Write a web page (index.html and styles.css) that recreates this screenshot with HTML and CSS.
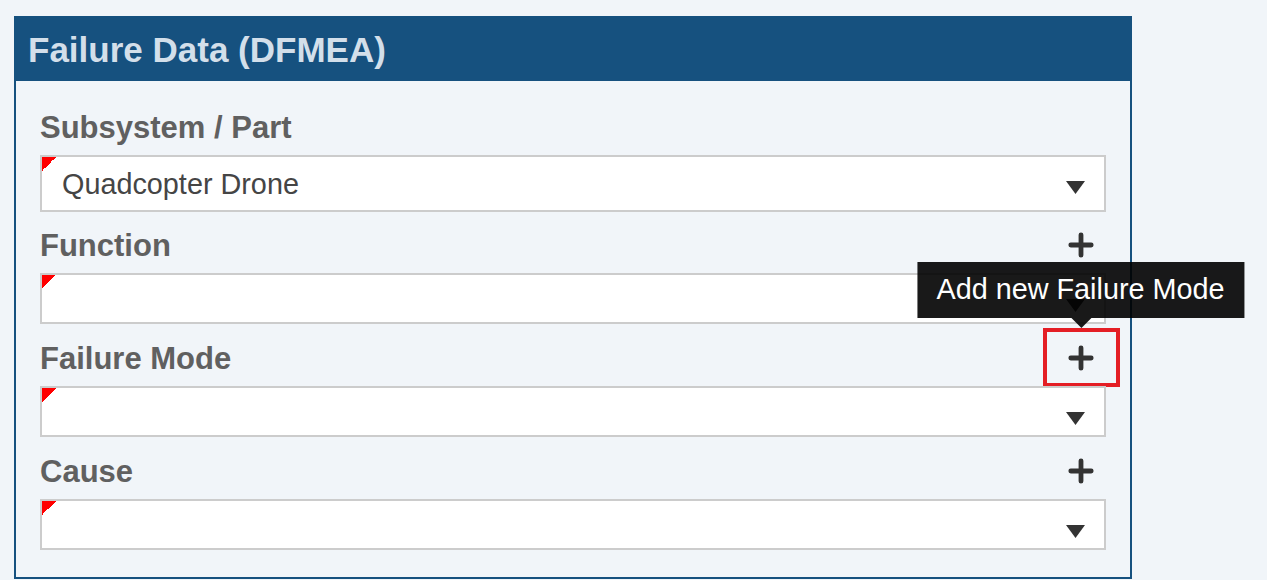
FILE: index.html
```html
<!DOCTYPE html>
<html lang="en">
<head>
<meta charset="utf-8">
<title>Failure Data (DFMEA)</title>
<link rel="stylesheet" href="styles.css">
</head>
<body>
<section class="panel">
  <header class="panel-head">Failure Data (DFMEA)</header>
  <div class="panel-body">
    <div class="field">
      <div class="label-row"><span class="label">Subsystem / Part</span></div>
      <div class="select select-filled">
        <span class="select-text">Quadcopter Drone</span>
        <svg class="caret" width="19" height="13" viewBox="0 0 19 13"><path d="M0 0H19L9.5 13Z" fill="#333"/></svg>
      </div>
    </div>
    <div class="field">
      <div class="label-row">
        <span class="label">Function</span>
        <span class="add"><svg width="26" height="26" viewBox="0 0 26 26"><path d="M2.8 13H23.2M13 2.8V23.2" stroke="#333" stroke-width="4.8" stroke-linecap="round"/></svg></span>
      </div>
      <div class="select">
        <span class="select-text"></span>
        <svg class="caret" width="19" height="13" viewBox="0 0 19 13"><path d="M0 0H19L9.5 13Z" fill="#333"/></svg>
      </div>
    </div>
    <div class="field">
      <div class="label-row">
        <span class="label">Failure Mode</span>
        <span class="add add-active">
          <svg width="26" height="26" viewBox="0 0 26 26"><path d="M2.8 13H23.2M13 2.8V23.2" stroke="#333" stroke-width="4.8" stroke-linecap="round"/></svg>
          <span class="highlight"></span>
          <span class="tooltip">Add new Failure Mode</span>
        </span>
      </div>
      <div class="select">
        <span class="select-text"></span>
        <svg class="caret" width="19" height="13" viewBox="0 0 19 13"><path d="M0 0H19L9.5 13Z" fill="#333"/></svg>
      </div>
    </div>
    <div class="field">
      <div class="label-row">
        <span class="label">Cause</span>
        <span class="add"><svg width="26" height="26" viewBox="0 0 26 26"><path d="M2.8 13H23.2M13 2.8V23.2" stroke="#333" stroke-width="4.8" stroke-linecap="round"/></svg></span>
      </div>
      <div class="select">
        <span class="select-text"></span>
        <svg class="caret" width="19" height="13" viewBox="0 0 19 13"><path d="M0 0H19L9.5 13Z" fill="#333"/></svg>
      </div>
    </div>
  </div>
</section>
</body>
</html>
```

FILE: styles.css
```css
* { box-sizing: border-box; }

html, body { height: 100%; }

body {
  margin: 0;
  padding: 16px 0 0 14px;
  background: #f1f5f9;
  font-family: "Liberation Sans", Arial, sans-serif;
  overflow: hidden;
}

.panel {
  width: 1118px;
  border: 2px solid #16517f;
  background: #f1f5f9;
}

.panel-head {
  background: #16517f;
  color: #d3dfea;
  font-size: 35px;
  font-weight: bold;
  height: 63px;
  line-height: 62px;
  padding: 1px 0 0 12px;
}

.panel-body {
  padding: 29px 24px 27px 24px;
  display: flex;
  flex-direction: column;
  gap: 16px;
}

.field:nth-child(n+3) { margin-top: 1px; }

.label-row {
  display: flex;
  align-items: center;
  justify-content: space-between;
  height: 36px;
  margin-bottom: 9px;
  padding-right: 12px;
}

.label {
  font-size: 31px;
  line-height: 36px;
  font-weight: bold;
  color: #606060;
}

.add {
  position: relative;
  display: flex;
  width: 26px;
  height: 26px;
  margin-top: -3px;
}

.highlight {
  position: absolute;
  left: -25px;
  top: -17px;
  width: 77px;
  height: 59px;
  border: 4px solid #e41e25;
}

.tooltip {
  position: absolute;
  left: 50%;
  bottom: calc(100% + 27px);
  transform: translateX(-50%);
  background: rgba(0, 0, 0, 0.9);
  color: #fff;
  font-size: 28.8px;
  white-space: nowrap;
  height: 56px;
  line-height: 54px;
  padding: 0 20px 2px 19px;
  z-index: 2;
}

.tooltip::after {
  content: "";
  position: absolute;
  left: 50%;
  top: 100%;
  margin-left: -10px;
  border-left: 10px solid transparent;
  border-right: 10px solid transparent;
  border-top: 10px solid rgba(0, 0, 0, 0.9);
}

.select {
  position: relative;
  display: flex;
  align-items: flex-start;
  height: 51px;
  background: #fff;
  border: 2px solid #cccccc;
  padding: 11px 19px 0 20px;
}

.select-filled { height: 57px; }

.select::before {
  content: "";
  position: absolute;
  left: 0;
  top: 0;
  width: 14px;
  height: 14px;
  background: linear-gradient(135deg, #ff0000 50%, transparent 50%);
}

.select-text {
  flex: 1;
  font-size: 28.8px;
  line-height: 32px;
  color: #454545;
}

.caret {
  margin-top: 13px;
  flex: none;
}
```
